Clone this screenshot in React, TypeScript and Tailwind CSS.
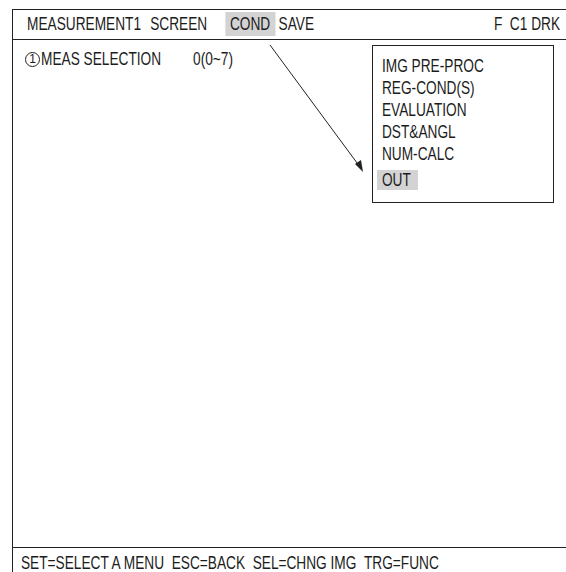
const menuItems = ["IMG PRE-PROC", "REG-COND(S)", "EVALUATION", "DST&ANGL", "NUM-CALC"];

// the screen font is a narrow grotesque; squeeze Liberation Sans horizontally
const narrow = "origin-left scale-x-[0.76] whitespace-nowrap";

export default function App() {
  return (
    <div className="relative w-[566px] h-[572px] overflow-hidden bg-white text-[#1c1c1c] text-[18px] leading-none font-['Liberation_Sans',Arial,sans-serif]">
      <div className="ml-[12px] mt-[9px] w-[600px] h-[563px] border-l border-t border-[#222] flex flex-col">
        {/* header */}
        <div className="h-[30px] shrink-0 border-b border-[#222] flex items-center pb-[1px]">
          <div className={`flex items-center ml-[14px] ${narrow}`}>
            <span>MEASUREMENT1</span>
            <span className="ml-[12px]">SCREEN</span>
            <span className="ml-[24px] pl-[6px] pr-[7px] h-[24px] flex items-center bg-[#d3d3d3]">COND</span>
            <span className="ml-[4px]">SAVE</span>
          </div>
          <span className="ml-auto mr-[52px] origin-right scale-x-[0.76] whitespace-nowrap">F&nbsp;&nbsp;C1 DRK</span>
        </div>

        {/* body */}
        <div className="flex-1 pt-[10px] pl-[12px]">
          <div className="flex items-center h-[18px]">
            <span className="w-[15px] h-[15px] shrink-0 rounded-full border border-[#222] flex items-center justify-center text-[12px] leading-none">
              1
            </span>
            <div className={`flex ml-[1px] ${narrow}`}>
              <span>MEAS SELECTION</span>
              <span className="ml-[42px]">0(0~7)</span>
            </div>
          </div>
        </div>

        {/* footer */}
        <div className="h-[25px] shrink-0 border-t border-[#222] flex items-center pl-[8px] pt-[5px]">
          <span className={narrow}>SET=SELECT A MENU&nbsp;&nbsp;ESC=BACK&nbsp;&nbsp;SEL=CHNG IMG&nbsp;&nbsp;TRG=FUNC</span>
        </div>
      </div>

      {/* arrow from COND down to OUT */}
      <svg className="absolute left-0 top-0" width="566" height="572">
        <line x1="270" y1="45" x2="360" y2="167" stroke="#222" strokeWidth="1" />
        <polygon points="363,172 355,164 361,160" fill="#222" />
      </svg>

      {/* pull-down menu */}
      <div className="absolute left-[372px] top-[45px] w-[182px] h-[158px] border border-[#222] bg-white pt-[9px] pl-[4px]">
        {menuItems.map((item) => (
          <div key={item} className={`h-[22px] flex items-center ${narrow}`}>
            <span className="pl-[6.5px]">{item}</span>
          </div>
        ))}
        <div className={`h-[22px] mt-[4px] flex items-center ${narrow}`}>
          <span className="pl-[6.5px] pr-[9px] h-[20px] flex items-center bg-[#d3d3d3]">OUT</span>
        </div>
      </div>
    </div>
  );
}
